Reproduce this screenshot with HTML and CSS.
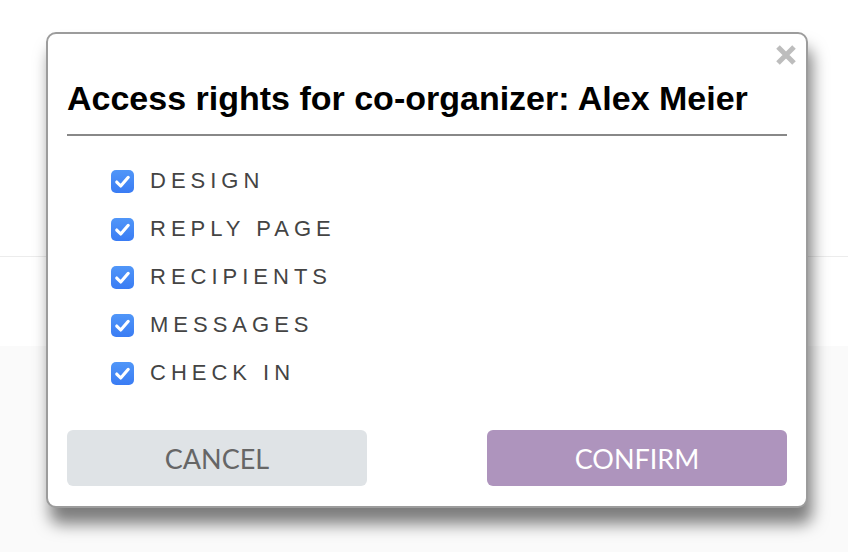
FILE: index.html
```html
<!DOCTYPE html>
<html>
<head>
<meta charset="utf-8">
<link rel="stylesheet" href="styles.css">
</head>
<body>
<div class="page">
  <div class="band band-top"></div>
  <div class="band band-mid"></div>
  <div class="band band-bottom"></div>
</div>
<div class="modal">
  <button class="close" aria-label="Close">
    <svg width="24" height="24" viewBox="0 0 24 24"><path d="M4 4L20 20M20 4L4 20" stroke="#bdbdbd" stroke-width="5" stroke-linecap="butt"/></svg>
  </button>
  <h1 class="title">Access rights for co-organizer: Alex Meier</h1>
  <div class="rule"></div>
  <ul class="rights">
    <li class="right"><span class="check"><svg viewBox="0 0 22 22"><path d="M5.5 11.5l3.8 3.8L16.5 7" fill="none" stroke="#fff" stroke-width="3" stroke-linecap="round" stroke-linejoin="round"/></svg></span><span class="label">DESIGN</span></li>
    <li class="right"><span class="check"><svg viewBox="0 0 22 22"><path d="M5.5 11.5l3.8 3.8L16.5 7" fill="none" stroke="#fff" stroke-width="3" stroke-linecap="round" stroke-linejoin="round"/></svg></span><span class="label">REPLY PAGE</span></li>
    <li class="right"><span class="check"><svg viewBox="0 0 22 22"><path d="M5.5 11.5l3.8 3.8L16.5 7" fill="none" stroke="#fff" stroke-width="3" stroke-linecap="round" stroke-linejoin="round"/></svg></span><span class="label">RECIPIENTS</span></li>
    <li class="right"><span class="check"><svg viewBox="0 0 22 22"><path d="M5.5 11.5l3.8 3.8L16.5 7" fill="none" stroke="#fff" stroke-width="3" stroke-linecap="round" stroke-linejoin="round"/></svg></span><span class="label">MESSAGES</span></li>
    <li class="right"><span class="check"><svg viewBox="0 0 22 22"><path d="M5.5 11.5l3.8 3.8L16.5 7" fill="none" stroke="#fff" stroke-width="3" stroke-linecap="round" stroke-linejoin="round"/></svg></span><span class="label">CHECK IN</span></li>
  </ul>
  <div class="actions">
    <button class="btn btn-cancel">CANCEL</button>
    <button class="btn btn-confirm">CONFIRM</button>
  </div>
</div>
</body>
</html>
```
FILE: styles.css
```css
html, body {
  margin: 0;
  padding: 0;
  background: #fff;
  font-family: "Liberation Sans", Arial, sans-serif;
}
.page {
  width: 848px;
  height: 552px;
  display: flex;
  flex-direction: column;
}
.band-top {
  height: 256px;
  border-bottom: 1px solid #ececec;
  background: #fff;
}
.band-mid {
  height: 89px;
  background: #fff;
}
.band-bottom {
  flex: 1;
  background: #fafafa;
}
.modal {
  position: absolute;
  left: 46px;
  top: 32px;
  width: 720px;
  padding: 0 19px 20px 19px;
  background: #fff;
  border: 2px solid #9c9c9c;
  border-radius: 10px;
  box-shadow: 4px 16px 16px rgba(0, 0, 0, 0.5);
}
.close {
  position: absolute;
  right: 8px;
  top: 9px;
  padding: 0;
  border: 0;
  background: none;
  width: 24px;
  height: 24px;
  display: block;
}
.close svg { display: block; }
.title {
  margin: 0;
  padding-top: 44px;
  font-size: 34px;
  line-height: 40px;
  font-weight: bold;
  color: #000;
}
.rule {
  margin-top: 16px;
  height: 2px;
  background: #888;
}
.rights {
  list-style: none;
  margin: 0;
  padding: 34px 0 0 44px;
  display: flex;
  flex-direction: column;
  gap: 26px;
}
.right {
  display: flex;
  align-items: center;
  height: 22px;
}
.check {
  width: 23px;
  height: 23px;
  border-radius: 5px;
  background: linear-gradient(#5096f8, #3a7cf4);
  margin-right: 16px;
  flex: none;
}
.check svg { display: block; width: 23px; height: 23px; }
.label {
  font-size: 22px;
  letter-spacing: 5px;
  color: #444;
}
.actions {
  margin-top: 46px;
  display: flex;
  justify-content: space-between;
}
.btn {
  width: 300px;
  height: 56px;
  border: 0;
  border-radius: 6px;
  font-family: Lato, "Open Sans", sans-serif;
  font-size: 27px;
  padding: 0;
}
.btn-cancel {
  background: #dfe3e6;
  color: #666;
}
.btn-confirm {
  background: #ae94bd;
  color: #fff;
}
```
